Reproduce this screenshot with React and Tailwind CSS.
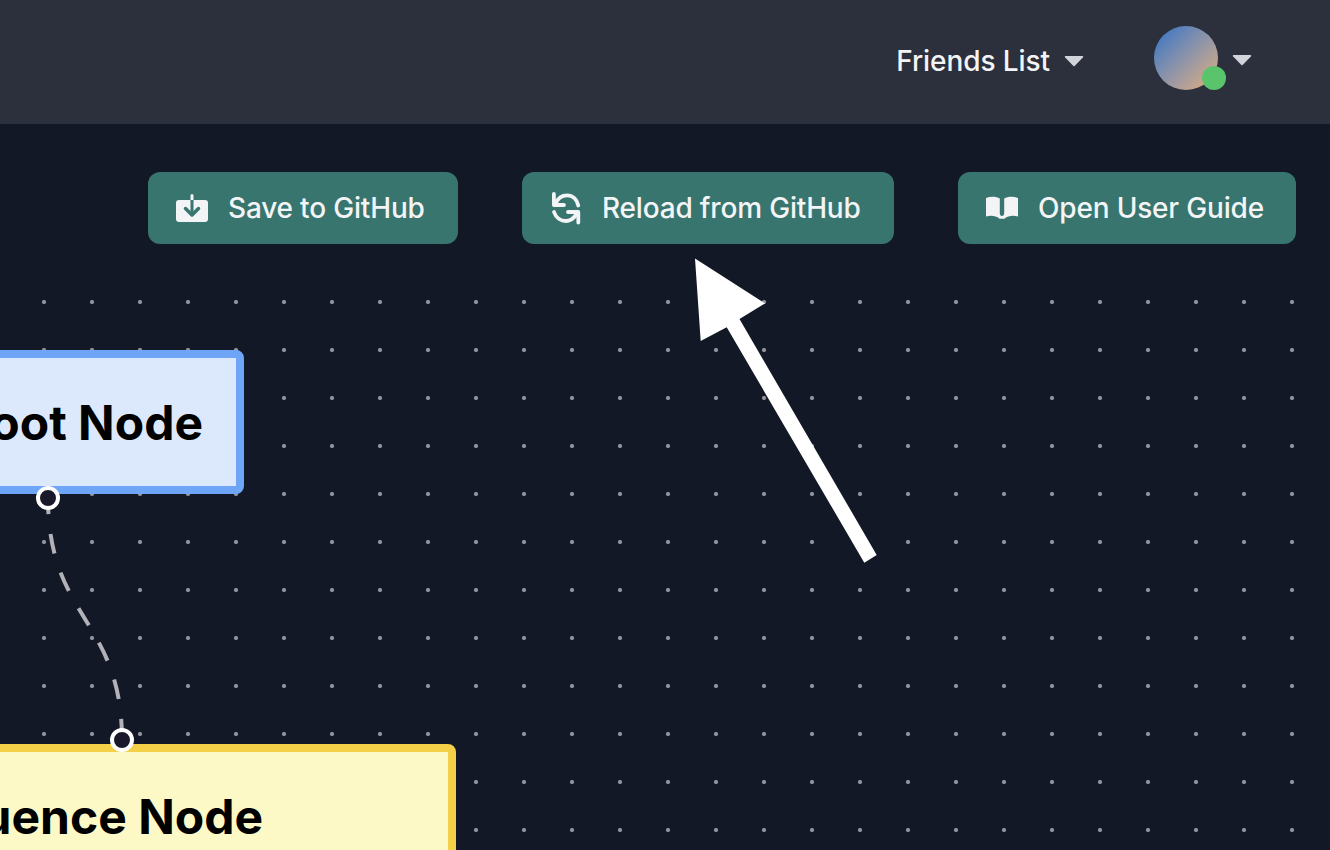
import React from "react";

function Caret({ className }) {
  return (
    <svg width="20" height="12" viewBox="0 0 20 12" className={className}>
      <path d="M1.5 1h17a.8.8 0 0 1 .6 1.300l-8.500 8.600a.9.9 0 0 1-1.200 0L.9 2.300A.8.8 0 0 1 1.500 1z" fill="#d1d5db" />
    </svg>
  );
}

function SaveIcon() {
  return (
    <svg width="32" height="28" viewBox="0 0 32 28" className="shrink-0">
      <rect x="0" y="6" width="32" height="22" rx="3" fill="#f3f4f6" />
      <path d="M16 1.500V6" stroke="#f3f4f6" strokeWidth="3" strokeLinecap="round" fill="none" />
      <path d="M16 6V21" stroke="#38756e" strokeWidth="3" fill="none" />
      <path d="M9.500 14.500L16 21l6.500-6.500" stroke="#38756e" strokeWidth="3.500" strokeLinecap="round" strokeLinejoin="round" fill="none" />
    </svg>
  );
}

function ReloadIcon() {
  return (
    <svg width="28" height="32" viewBox="0 0 28 32" fill="none" stroke="#f3f4f6" strokeWidth="3.800" strokeLinecap="round" strokeLinejoin="round" className="shrink-0 overflow-visible">
      <path d="M1.900 1.900V13H12" />
      <path d="M3.500 11.500C6 6 10 3.300 15 3.300C21 3.300 25 7.500 26.300 13.500" />
      <path d="M2 20C4 26 9 29 14 29C18 29 21 27 24 23" />
      <path d="M16 20H26.300V30.500" />
    </svg>
  );
}

function BookIcon() {
  return (
    <svg width="32" height="24" viewBox="0 0 32 24" className="shrink-0">
      <path d="M0 2C5 .3 10 .5 13.800 2.500V17c0 2 .9 3 2.200 3s2.200-1 2.200-3V2.500C22 .5 27 .3 32 2V20.500C27 19.300 22 19.700 18.500 22.800H13.500C10 19.700 5 19.300 0 20.500Z" fill="#f3f4f6" />
    </svg>
  );
}

function ActionButton({ icon, label, className }) {
  return (
    <button className={`flex h-[72px] items-center rounded-xl bg-[#38756e] pl-7 text-[28px] font-medium tracking-[-0.18px] text-[#f3f4f6] ${className}`}>
      {icon}
      <span>{label}</span>
    </button>
  );
}

function Node({ label, className }) {
  return (
    <div className={`absolute flex items-center justify-end rounded-lg border-[8px] pt-[2px] text-[48px] font-bold text-black ${className}`}>
      {label}
    </div>
  );
}

function Handle({ className }) {
  return <div className={`absolute h-6 w-6 rounded-full border-[4px] border-white bg-[#1a192b] ${className}`} />;
}

export default function App() {
  return (
    <div className="relative flex h-screen flex-col overflow-hidden bg-[#121826] font-['Inter',sans-serif]">
      <header className="flex h-[124px] shrink-0 items-start justify-end bg-[#2c303c] pr-[78px]">
        <div className="mt-[40px] flex items-center gap-[14px] text-[28px] font-medium tracking-[-0.08px] text-[#f3f4f6]">
          <span>Friends List</span>
          <Caret />
        </div>
        <div className="ml-[70px] mt-[26px] flex items-center gap-[14px]">
          <div className="relative h-16 w-16 rounded-full bg-gradient-to-br from-[#2870c6] to-[#e6ae78]">
            <div className="absolute left-[48px] top-[40px] h-6 w-6 rounded-full bg-[#5ac46c]" />
          </div>
          <Caret className="mt-1" />
        </div>
      </header>

      <div className="flex h-[154px] shrink-0 items-start justify-end gap-16 pr-[34px] pt-12">
        <ActionButton className="w-[310px] gap-[20px]" icon={<SaveIcon />} label="Save to GitHub" />
        <ActionButton className="w-[372px] gap-[22px] pl-[30px]" icon={<ReloadIcon />} label="Reload from GitHub" />
        <ActionButton className="w-[338px] gap-[20px]" icon={<BookIcon />} label="Open User Guide" />
      </div>

      <main className="relative flex-1 bg-[radial-gradient(circle,#94949d_1.5px,transparent_2.6px)] bg-[length:48px_48px] bg-[position:20px_0px]">
        <svg className="absolute left-0 top-0 overflow-visible" width="200" height="500">
          <path d="M48 220 C48 341 122 341 122 462" fill="none" stroke="#b1b1b7" strokeWidth="4" strokeDasharray="20 20" strokeDashoffset="4" />
        </svg>
        <Node label="Root Node" className="-left-[200px] top-[72px] h-[144px] w-[444px] border-[#6fa5f7] bg-[#dce9fc] pr-[33px]" />
        <Handle className="left-[36px] top-[208px]" />
        <Node label="Sequence Node" className="-left-[200px] top-[466px] h-[144px] w-[656px] border-[#f4cf48] bg-[#fdf9c6] pr-[185px]" />
        <Handle className="left-[110px] top-[450px]" />
      </main>

      <svg className="pointer-events-none absolute left-0 top-0" width="1330" height="850">
        <polygon points="695,258.500 765,303.500 739.500,319 876.700,555 864.300,562.700 726.700,327.300 700.700,341" fill="#ffffff" />
      </svg>
    </div>
  );
}
